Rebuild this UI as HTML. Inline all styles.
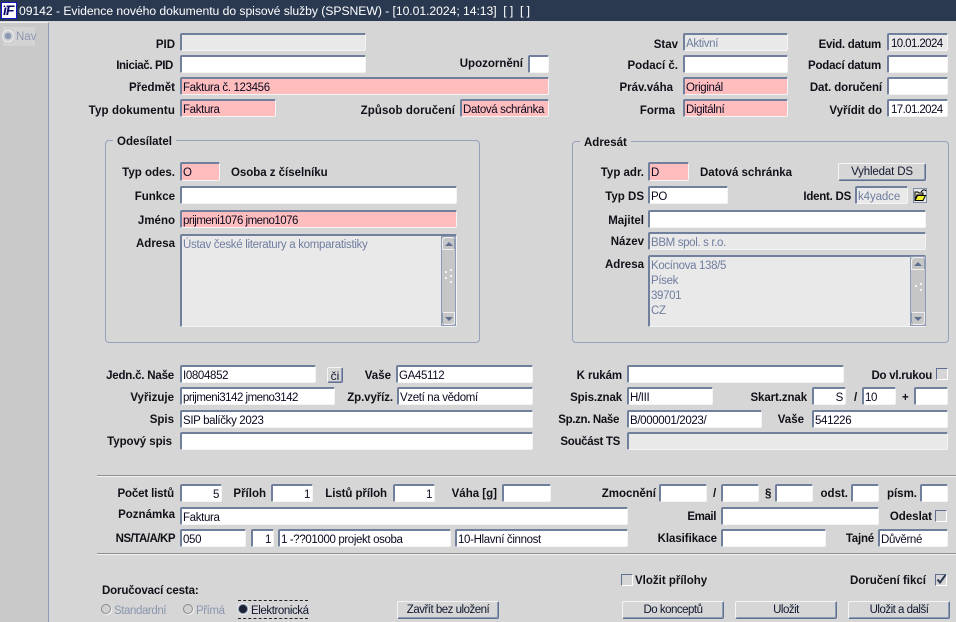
<!DOCTYPE html>
<html lang="cs">
<head>
<meta charset="utf-8">
<title>Evidence</title>
<style>
html,body{margin:0;padding:0;width:956px;height:622px;overflow:hidden;background:#d6d6d6;}
body{position:relative;font-family:"Liberation Sans",Arial,sans-serif;font-size:12px;color:#000;}
div,span{position:absolute;white-space:nowrap;box-sizing:border-box;}
.f{height:18px;background:#fff;border:2px solid;border-color:#6f7f9c #f4f4f4 #f4f4f4 #6f7f9c;border-right-width:1px;border-bottom-width:1px;border-radius:2px;font-size:11.5px;letter-spacing:-.35px;line-height:19px;padding-left:1px;color:#0a0a20;}
.r{background:#ffbdbd;}
.g{background:#e9e9e9;}
.d{color:#6f7d9f;}
.n{text-align:right;padding-right:2px;padding-left:0;}
.l{font-weight:bold;font-size:11.5px;line-height:18px;height:18px;color:#101018;}
.b{height:18px;background:#d6d6d6;border:1px solid;border-color:#f4f4f4 #5f6f8f #5f6f8f #f4f4f4;border-radius:2px;font-size:11.5px;letter-spacing:-.5px;line-height:17px;text-align:center;color:#101830;box-shadow:-1px -1px 0 #8f9cb5 inset;}
.c{width:12px;height:12px;background:#d6d6d6;border:1px solid;border-color:#5f6f8f #fff #fff #5f6f8f;}
.gb{border:1px solid #95a2ba;border-radius:4px;}
.lg{background:#d6d6d6;font-weight:bold;font-size:11.5px;line-height:14px;padding:0 4px;color:#101018;}
.hr{height:2px;background:#8f8f8f;border-bottom:1px solid #f2f2f2;}
.sb{background:#c6c6c6;border:1px solid #8c9ab4;}
.t{font-size:11.5px;letter-spacing:-.42px;line-height:16px;}
</style>
</head>
<body>
<div style="left:0;top:0;width:956px;height:21px;background:#2a3950"></div>
<div style="left:1px;top:2px;width:16px;height:17px;background:#fff;border:1px solid #1818c8"></div>
<div style="left:3px;top:3px;font:italic bold 14px/15px 'Liberation Sans',sans-serif;color:#0c0c70;letter-spacing:-1px">ïF</div>
<div style="left:19px;top:2px;color:#fff;font-size:12.2px;line-height:18px;letter-spacing:-.05px">09142 - Evidence nového dokumentu do spisové služby (SPSNEW) - [10.01.2024; 14:13]&nbsp; [ ]&nbsp; [ ]</div>

<div style="left:0;top:22px;width:49px;height:600px;background:#c9c9c9;border-right:1px solid #8c9ab4;border-top:1px solid #eee"></div>
<div style="left:3px;top:27px;width:32px;height:19px;background:#d3d3d3"></div>
<div style="left:3px;top:31px;width:10px;height:10px;border-radius:50%;background:#8a96ae;border:2px solid #c4c8d0;box-shadow:0 0 0 1px #eee"></div>
<div style="left:16px;top:29px;color:#8c98b0;font-size:11.5px;line-height:16px">Nav</div>

<!-- top rows -->
<div class="l" style="right:781px;top:36px">PID</div>
<div class="f g" style="left:180px;top:33px;width:186px"></div>
<div class="l" style="right:783px;top:57px;letter-spacing:-.38px">Iniciač. PID</div>
<div class="f" style="left:180px;top:55px;width:186px"></div>
<div class="l" style="right:433px;top:55px">Upozornění</div>
<div class="f" style="left:528px;top:55px;width:21px"></div>
<div class="l" style="right:781px;top:79px">Předmět</div>
<div class="f r" style="left:180px;top:77px;width:369px">Faktura č. 123456</div>
<div class="l" style="right:781px;top:102px;letter-spacing:.12px">Typ dokumentu</div>
<div class="f r" style="left:180px;top:99px;width:96px">Faktura</div>
<div class="l" style="right:501px;top:102px;letter-spacing:.07px">Způsob doručení</div>
<div class="f r" style="left:460px;top:99px;width:89px">Datová schránka</div>

<div class="l" style="right:278px;top:36px">Stav</div>
<div class="f g d" style="left:683px;top:33px;width:105px">Aktivní</div>
<div class="l" style="right:278px;top:57px">Podací č.</div>
<div class="f" style="left:683px;top:55px;width:105px"></div>
<div class="l" style="right:283px;top:79px">Práv.váha</div>
<div class="f r" style="left:683px;top:77px;width:105px">Originál</div>
<div class="l" style="right:281px;top:102px">Forma</div>
<div class="f r" style="left:683px;top:99px;width:105px">Digitální</div>

<div class="l" style="right:75px;top:36px;letter-spacing:-.25px">Evid. datum</div>
<div class="f g" style="left:887px;top:33px;width:61px;padding-left:2px;letter-spacing:-.6px">10.01.2024</div>
<div class="l" style="right:75px;top:57px;letter-spacing:-.2px">Podací datum</div>
<div class="f" style="left:887px;top:55px;width:61px"></div>
<div class="l" style="right:74px;top:79px;letter-spacing:-.1px">Dat. doručení</div>
<div class="f" style="left:887px;top:77px;width:61px"></div>
<div class="l" style="right:74px;top:102px">Vyřídit do</div>
<div class="f" style="left:887px;top:99px;width:61px;padding-left:2px;letter-spacing:-.6px">17.01.2024</div>

<!-- Odesilatel -->
<div class="gb" style="left:105px;top:140px;width:375px;height:203px"></div>
<div class="lg" style="left:113px;top:135px">Odesílatel</div>
<div class="l" style="right:781px;top:164px">Typ odes.</div>
<div class="f r" style="left:180px;top:162px;width:40px;height:19px">O</div>
<div class="l" style="left:231px;top:164px;letter-spacing:-.03px">Osoba z číselníku</div>
<div class="l" style="right:781px;top:188px">Funkce</div>
<div class="f" style="left:180px;top:186px;width:277px"></div>
<div class="l" style="right:781px;top:212px">Jméno</div>
<div class="f r" style="left:180px;top:210px;width:277px;letter-spacing:-.5px">prijmeni1076 jmeno1076</div>
<div class="l" style="right:781px;top:235px">Adresa</div>
<div class="f g d" style="left:180px;top:234px;width:277px;height:93px;padding-top:2px;line-height:15px;letter-spacing:-.3px">Ústav české literatury a komparatistiky</div>
<div class="sb" style="left:441px;top:236px;width:15px;height:90px"></div>
<div class="sb" style="left:442px;top:237px;width:13px;height:13px;border-radius:4px 4px 0 0;border-color:#f0f0f0 #8c9ab4 #f0f0f0 #f0f0f0"></div>
<div style="left:445px;top:242px;width:0;height:0;border:4px solid transparent;border-top:0;border-bottom:4px solid #5f6f8f"></div>
<div class="sb" style="left:442px;top:312px;width:13px;height:13px;border-radius:0 0 4px 4px;border-color:#f0f0f0 #f0f0f0 #f0f0f0 #8c9ab4"></div>
<div style="left:445px;top:317px;width:0;height:0;border:4px solid transparent;border-bottom:0;border-top:4px solid #5f6f8f"></div>
<svg style="position:absolute;left:444px;top:268px" width="10" height="18"><g fill="#f4f4f4"><rect x="1" y="3" width="2" height="2"/><rect x="6" y="1" width="2" height="2"/><rect x="1" y="9" width="2" height="2"/><rect x="6" y="7" width="2" height="2"/><rect x="6" y="13" width="2" height="2"/></g></svg>

<!-- Adresat -->
<div class="gb" style="left:572px;top:141px;width:377px;height:202px"></div>
<div class="lg" style="left:580px;top:136px">Adresát</div>
<div class="l" style="right:312px;top:164px">Typ adr.</div>
<div class="f r" style="left:648px;top:162px;width:41px;height:19px">D</div>
<div class="l" style="left:700px;top:164px">Datová schránka</div>
<div class="b" style="left:838px;top:163px;width:88px;height:18px;letter-spacing:-.15px">Vyhledat DS</div>
<div class="l" style="right:312px;top:188px">Typ DS</div>
<div class="f" style="left:648px;top:186px;width:80px">PO</div>
<div class="l" style="right:105px;top:188px;letter-spacing:-.25px">Ident. DS</div>
<div class="f g d" style="left:855px;top:186px;width:53px;letter-spacing:-.1px">k4yadce</div>
<svg style="position:absolute;left:913px;top:188px" width="14" height="15" viewBox="0 0 14 15"><rect x=".5" y=".5" width="13" height="14" fill="#e8e8e8" stroke="#7f8fa8"/><path d="M2 12V4h3l1 1h4v2H4l-2 5z" fill="#d8d8c0" stroke="#000"/><path d="M2 12.5 4.5 7.5H12.5L10 12.5z" fill="#f2ee30" stroke="#000"/><path d="M8 4l2-2h2l1 1" fill="none" stroke="#000"/></svg>
<div class="l" style="right:312px;top:212px">Majitel</div>
<div class="f" style="left:648px;top:210px;width:278px"></div>
<div class="l" style="right:312px;top:233px">Název</div>
<div class="f g d" style="left:648px;top:232px;width:278px">BBM spol. s r.o.</div>
<div class="l" style="right:312px;top:256px">Adresa</div>
<div class="f g d" style="left:648px;top:255px;width:278px;height:72px;line-height:15px;padding-top:2px;white-space:pre-line">Kocínova 138/5
Písek
39701
CZ</div>
<div class="sb" style="left:910px;top:256px;width:16px;height:70px"></div>
<div class="sb" style="left:911px;top:257px;width:14px;height:13px;border-radius:4px 4px 0 0;border-color:#f0f0f0 #8c9ab4 #f0f0f0 #f0f0f0"></div>
<div style="left:914px;top:262px;width:0;height:0;border:4px solid transparent;border-top:0;border-bottom:4px solid #5f6f8f"></div>
<div class="sb" style="left:911px;top:312px;width:14px;height:13px;border-radius:0 0 4px 4px;border-color:#f0f0f0 #f0f0f0 #f0f0f0 #8c9ab4"></div>
<div style="left:914px;top:317px;width:0;height:0;border:4px solid transparent;border-bottom:0;border-top:4px solid #5f6f8f"></div>
<svg style="position:absolute;left:914px;top:282px" width="10" height="14"><g fill="#f4f4f4"><rect x="1" y="3" width="2" height="2"/><rect x="6" y="1" width="2" height="2"/><rect x="6" y="7" width="2" height="2"/></g></svg>

<!-- middle rows -->
<div class="l" style="right:782px;top:367px;letter-spacing:-.2px">Jedn.č. Naše</div>
<div class="f" style="left:180px;top:365px;width:136px">I0804852</div>
<div class="b" style="left:327px;top:367px;width:16px;height:16px;line-height:16px;font-size:12px;letter-spacing:0">či</div>
<div class="l" style="right:565px;top:367px">Vaše</div>
<div class="f" style="left:396px;top:365px;width:137px">GA45112</div>
<div class="l" style="right:782px;top:389px">Vyřizuje</div>
<div class="f" style="left:180px;top:387px;width:155px;letter-spacing:-.5px">prijmeni3142 jmeno3142</div>
<div class="l" style="right:563px;top:389px;letter-spacing:-.1px">Zp.vyříz.</div>
<div class="f" style="left:397px;top:387px;width:136px">Vzetí na vědomí</div>
<div class="l" style="right:782px;top:411px">Spis</div>
<div class="f" style="left:180px;top:410px;width:353px">SIP balíčky 2023</div>
<div class="l" style="right:784px;top:433px;letter-spacing:-.07px">Typový spis</div>
<div class="f" style="left:180px;top:432px;width:353px"></div>

<div class="l" style="right:334px;top:367px;letter-spacing:-.1px">K rukám</div>
<div class="f" style="left:627px;top:365px;width:217px"></div>
<div class="l" style="right:24px;top:367px;letter-spacing:-.25px">Do vl.rukou</div>
<div class="c" style="left:936px;top:368px"></div>
<div class="l" style="right:334px;top:389px;letter-spacing:-.13px">Spis.znak</div>
<div class="f" style="left:627px;top:387px;width:86px">H/III</div>
<div class="l" style="right:149px;top:389px;letter-spacing:-.1px">Skart.znak</div>
<div class="f n" style="left:812px;top:387px;width:34px">S</div>
<div class="l" style="left:854px;top:389px">/</div>
<div class="f" style="left:862px;top:387px;width:34px">10</div>
<div class="l" style="left:902px;top:389px">+</div>
<div class="f" style="left:914px;top:387px;width:34px"></div>
<div class="l" style="right:337px;top:411px;letter-spacing:-.35px">Sp.zn. Naše</div>
<div class="f" style="left:627px;top:410px;width:135px">B/000001/2023/</div>
<div class="l" style="right:152px;top:411px">Vaše</div>
<div class="f" style="left:812px;top:410px;width:136px">541226</div>
<div class="l" style="right:336px;top:433px;letter-spacing:-.3px">Součást TS</div>
<div class="f g" style="left:627px;top:432px;width:321px"></div>

<div class="hr" style="left:97px;top:475px;width:859px"></div>

<!-- lower rows -->
<div class="l" style="right:782px;top:485px;letter-spacing:-.15px">Počet listů</div>
<div class="f n" style="left:180px;top:484px;width:42px">5</div>
<div class="l" style="right:690px;top:485px">Příloh</div>
<div class="f n" style="left:271px;top:484px;width:42px">1</div>
<div class="l" style="right:569px;top:485px;letter-spacing:-.07px">Listů příloh</div>
<div class="f n" style="left:393px;top:484px;width:42px">1</div>
<div class="l" style="right:459px;top:485px">Váha [g]</div>
<div class="f" style="left:502px;top:484px;width:49px"></div>
<div class="l" style="right:300px;top:485px">Zmocnění</div>
<div class="f" style="left:659px;top:484px;width:48px"></div>
<div class="l" style="left:713px;top:485px">/</div>
<div class="f" style="left:721px;top:484px;width:38px"></div>
<div class="l" style="left:765px;top:485px">§</div>
<div class="f" style="left:775px;top:484px;width:38px"></div>
<div class="l" style="right:108px;top:485px">odst.</div>
<div class="f" style="left:851px;top:484px;width:28px"></div>
<div class="l" style="right:39px;top:485px">písm.</div>
<div class="f" style="left:920px;top:484px;width:28px"></div>

<div class="l" style="right:781px;top:506px">Poznámka</div>
<div class="f" style="left:180px;top:507px;width:448px">Faktura</div>
<div class="l" style="right:240px;top:508px;letter-spacing:-.4px">Email</div>
<div class="f" style="left:721px;top:507px;width:158px"></div>
<div class="l" style="right:24px;top:508px">Odeslat</div>
<div class="c" style="left:935px;top:510px"></div>

<div class="l" style="right:781px;top:530px;letter-spacing:-.5px">NS/TA/A/KP</div>
<div class="f" style="left:180px;top:529px;width:66px">050</div>
<div class="f n" style="left:251px;top:529px;width:23px">1</div>
<div class="f" style="left:278px;top:529px;width:173px;letter-spacing:-.37px">1 -??01000 projekt osoba</div>
<div class="f" style="left:455px;top:529px;width:173px">10-Hlavní činnost</div>
<div class="l" style="right:239px;top:530px;letter-spacing:-.07px">Klasifikace</div>
<div class="f" style="left:721px;top:529px;width:105px"></div>
<div class="l" style="right:82px;top:530px;letter-spacing:-.2px">Tajné</div>
<div class="f" style="left:878px;top:529px;width:70px">Důvěrné</div>

<div class="hr" style="left:97px;top:553px;width:859px"></div>

<!-- bottom -->
<div class="l" style="left:102px;top:582px;letter-spacing:-.15px">Doručovací cesta:</div>
<div style="left:101px;top:604px;width:10px;height:10px;border-radius:50%;border:1px solid #8a8a8a;background:#d0d0d0;box-shadow:1px 1px 0 #f4f4f4"></div>
<div class="t" style="left:114px;top:603px;color:#8a96ae">Standardní</div>
<div style="left:183px;top:604px;width:10px;height:10px;border-radius:50%;border:1px solid #8a8a8a;background:#d0d0d0;box-shadow:1px 1px 0 #f4f4f4"></div>
<div class="t" style="left:196px;top:603px;color:#8a96ae">Přímá</div>
<div style="left:238px;top:600px;width:70px;height:19px;border-top:1px dashed #222;border-bottom:1px dashed #222"></div>
<div style="left:238px;top:604px;width:10px;height:10px;border-radius:50%;background:#1c2233;border:1px solid #7f8fa8;box-shadow:0 0 0 1px #eee"></div>
<div class="t" style="left:251px;top:603px;color:#101830">Elektronická</div>
<div class="b" style="left:397px;top:601px;width:102px">Zavřít bez uložení</div>

<div class="c" style="left:621px;top:574px"></div>
<div class="l" style="left:635px;top:572px">Vložit přílohy</div>
<div class="l" style="right:30px;top:572px">Doručení fikcí</div>
<div class="c" style="left:935px;top:574px"></div>
<svg style="position:absolute;left:935px;top:572px" width="13" height="14" viewBox="0 0 13 14"><path d="M2.5 7.5 5 10.5 10.5 3" fill="none" stroke="#2a3950" stroke-width="2"/></svg>
<div class="b" style="left:622px;top:601px;width:102px">Do konceptů</div>
<div class="b" style="left:735px;top:601px;width:102px">Uložit</div>
<div class="b" style="left:848px;top:601px;width:102px">Uložit a další</div>
</body>
</html>
